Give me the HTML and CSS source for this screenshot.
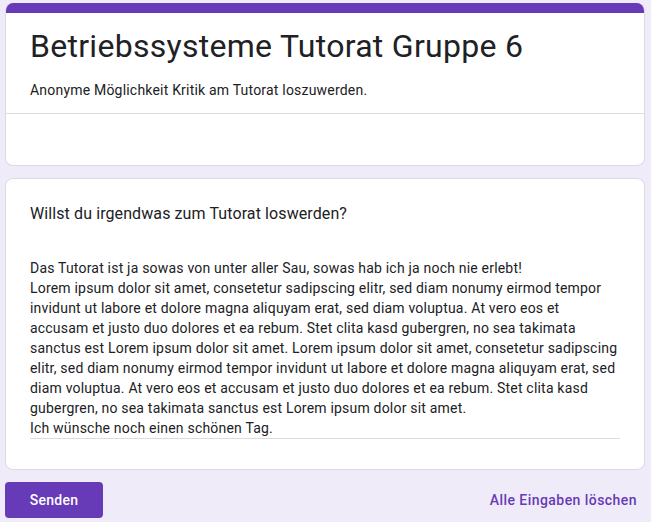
FILE: index.html
```html
<!DOCTYPE html>
<html lang="de">
<head>
<meta charset="utf-8">
<title>Betriebssysteme Tutorat Gruppe 6</title>
<link rel="stylesheet" href="styles.css">
</head>
<body>
<main class="form">
  <section class="card header-card">
    <div class="header-bar"></div>
    <div class="header-body">
      <h1 class="title">Betriebssysteme Tutorat Gruppe 6</h1>
      <p class="description">Anonyme Möglichkeit Kritik am Tutorat loszuwerden.</p>
    </div>
    <div class="header-footer"></div>
  </section>

  <section class="card question-card">
    <h2 class="question">Willst du irgendwas zum Tutorat loswerden?</h2>
    <div class="answer">Das Tutorat ist ja sowas von unter aller Sau, sowas hab ich ja noch nie erlebt!
Lorem ipsum dolor sit amet, consetetur sadipscing elitr, sed diam nonumy eirmod tempor invidunt ut labore et dolore magna aliquyam erat, sed diam voluptua. At vero eos et accusam et justo duo dolores et ea rebum. Stet clita kasd gubergren, no sea takimata sanctus est Lorem ipsum dolor sit amet. Lorem ipsum dolor sit amet, consetetur sadipscing elitr, sed diam nonumy eirmod tempor invidunt ut labore et dolore magna aliquyam erat, sed diam voluptua. At vero eos et accusam et justo duo dolores et ea rebum. Stet clita kasd gubergren, no sea takimata sanctus est Lorem ipsum dolor sit amet.
Ich wünsche noch einen schönen Tag.</div>
  </section>

  <div class="actions">
    <button class="submit" type="button">Senden</button>
    <a class="clear" href="#">Alle Eingaben löschen</a>
  </div>
</main>
</body>
</html>
```
FILE: styles.css
```css
html, body {
  margin: 0;
  padding: 0;
  background: #f0ebf8;
}

body {
  font-family: Roboto, "Liberation Sans", Arial, sans-serif;
  color: #202124;
}

.form {
  width: 640px;
  padding: 3px 0 0 5px;
  display: flex;
  flex-direction: column;
}

.card {
  background: #fff;
  border: 1px solid #dadce0;
  border-radius: 8px;
  box-sizing: border-box;
}

.header-card {
  border-top: none;
  overflow: hidden;
}

.header-bar {
  height: 10px;
  background: #673ab7;
}

.header-body {
  padding: 13px 24px 13px 24px;
  border-bottom: 1px solid #dadce0;
}

.title {
  margin: 0;
  font-size: 32px;
  line-height: 40px;
  font-weight: 400;
  letter-spacing: 0.28px;
  color: #202124;
}

.description {
  margin: 14px 0 0 0;
  font-size: 14px;
  line-height: 20px;
  letter-spacing: 0.2px;
  color: #202124;
}

.header-footer {
  height: 51px;
}

.question-card {
  margin-top: 12px;
  padding: 23px 24px 30px 24px;
}

.question {
  margin: 0;
  font-size: 16px;
  line-height: 24px;
  font-weight: 400;
  letter-spacing: 0.1px;
  color: #202124;
}

.answer {
  margin-top: 32px;
  font-size: 14px;
  line-height: 20px;
  letter-spacing: 0.2px;
  white-space: pre-line;
  color: #202124;
  border-bottom: 1px solid #dadce0;
}

.actions {
  margin-top: 12px;
  display: flex;
  align-items: center;
  justify-content: space-between;
}

.submit {
  width: 98px;
  height: 36px;
  border: none;
  border-radius: 4px;
  background: #673ab7;
  color: #fff;
  font-family: Roboto, "Liberation Sans", Arial, sans-serif;
  font-size: 14px;
  font-weight: 500;
  letter-spacing: 0.25px;
  padding: 0;
}

.clear {
  margin-right: 8px;
  color: #673ab7;
  text-decoration: none;
  font-family: Roboto, "Liberation Sans", Arial, sans-serif;
  font-size: 14px;
  font-weight: 500;
  letter-spacing: 0.45px;
}
```
